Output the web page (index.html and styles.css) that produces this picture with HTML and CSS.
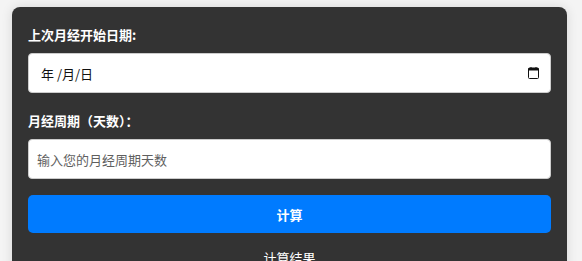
FILE: index.html
```html
<!DOCTYPE html>
<html lang="zh-CN">
<head>
<meta charset="utf-8">
<title>月经周期计算器</title>
<link rel="stylesheet" href="styles.css">
</head>
<body>
<div class="card">
  <label class="field-label" for="last">上次月经开始日期:</label>
  <div class="date-input" id="last">
    <span class="date-text">年 /月/日</span>
    <svg class="cal-icon" width="11" height="12" viewBox="0 0 11 12" aria-hidden="true">
      <rect x="0.5" y="1" width="10" height="10.5" rx="1" fill="none" stroke="#111" stroke-width="1"/>
      <rect x="0.5" y="1" width="10" height="2.5" fill="#111"/>
      <rect x="2.5" y="0" width="1" height="2" fill="#111"/>
      <rect x="7.5" y="0" width="1" height="2" fill="#111"/>
    </svg>
  </div>
  <label class="field-label" for="cycle">月经周期（天数）：</label>
  <input class="text-input" id="cycle" type="text" placeholder="输入您的月经周期天数">
  <button class="calc-btn" type="button">计算</button>
  <div class="result-title">计算结果</div>
</div>
</body>
</html>
```

FILE: styles.css
```css
* { box-sizing: border-box; }
html, body { height: 100%; }
body {
  margin: 0;
  padding: 7px 15px 0 12px;
  background: #f4f4f4;
  font-family: "Noto Sans CJK SC", "Noto Sans", sans-serif;
  overflow: hidden;
}
.card {
  background: #333333;
  border-radius: 8px;
  box-shadow: 0 0 12px rgba(0, 0, 0, 0.12);
  padding: 18px 16px 20px;
  display: flex;
  flex-direction: column;
  color: #fff;
}
.field-label {
  display: block;
  font-size: 13px;
  line-height: 19px;
  font-weight: bold;
  color: #fff;
  margin-bottom: 9px;
}
.date-input, .text-input {
  height: 40px;
  width: 100%;
  background: #fff;
  border: 1px solid #ccc;
  border-radius: 4px;
  font-family: "Noto Sans CJK SC", "Noto Sans", sans-serif;
  font-size: 13px;
  margin: 0 0 18px;
}
.date-input {
  display: flex;
  align-items: center;
  justify-content: space-between;
  padding: 0 11px 0 12px;
  color: #111;
}
.cal-icon { display: block; }
.text-input {
  padding: 0 8px;
  color: #222;
  outline: none;
  margin-bottom: 16px;
}
.text-input::placeholder { color: #5f5f5f; }
.calc-btn {
  height: 38px;
  width: 100%;
  border: none;
  border-radius: 5px;
  background: #007bff;
  color: #fff;
  font-family: "Noto Sans CJK SC", "Noto Sans", sans-serif;
  font-size: 13px;
  font-weight: bold;
}
.result-title {
  text-align: center;
  font-size: 13px;
  line-height: 19px;
  margin-top: 15px;
  color: #fff;
}
```
